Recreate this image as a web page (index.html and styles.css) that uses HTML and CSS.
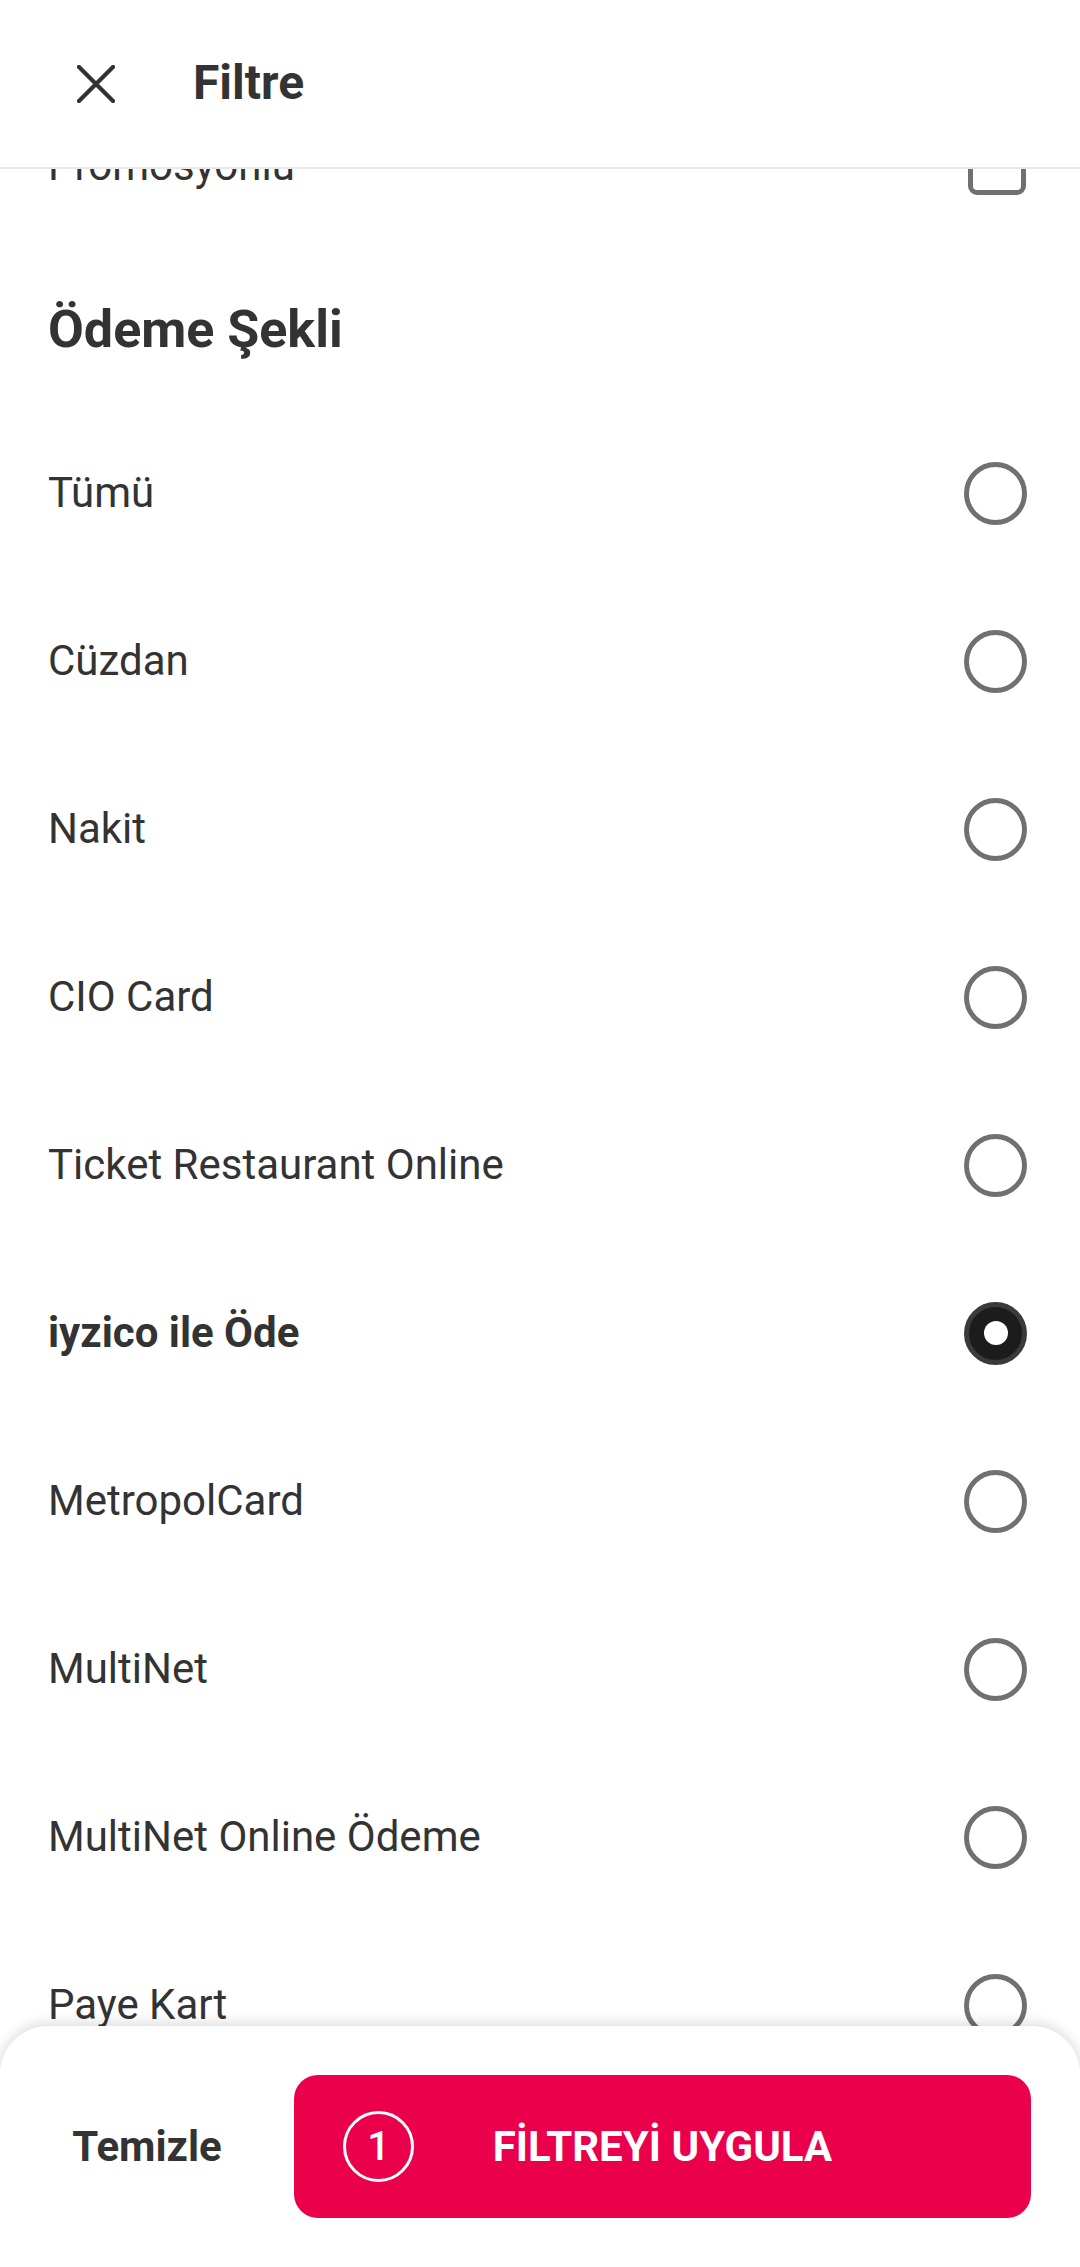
FILE: index.html
```html
<!DOCTYPE html>
<html lang="tr">
<head>
<meta charset="utf-8">
<title>Filtre</title>
<link rel="stylesheet" href="styles.css">
</head>
<body>
<div class="screen">
  <header class="topbar">
    <button class="close-btn" aria-label="Kapat">
      <svg width="38" height="38" viewBox="0 0 38 38"><path d="M2 2 L36 36 M36 2 L2 36" stroke="#333" stroke-width="4.2" stroke-linecap="round" fill="none"/></svg>
    </button>
    <h1 class="title">Filtre</h1>
  </header>
  <main class="content">
    <div class="list">
      <div class="row"><span class="label">Promosyonlu</span><span class="checkbox"></span></div>
      <h2 class="section-title">Ödeme Şekli</h2>
      <div class="row"><span class="label">Tümü</span><span class="radio"></span></div>
      <div class="row"><span class="label">Cüzdan</span><span class="radio"></span></div>
      <div class="row"><span class="label">Nakit</span><span class="radio"></span></div>
      <div class="row"><span class="label">CIO Card</span><span class="radio"></span></div>
      <div class="row"><span class="label">Ticket Restaurant Online</span><span class="radio"></span></div>
      <div class="row selected"><span class="label">iyzico ile Öde</span><span class="radio checked"></span></div>
      <div class="row"><span class="label">MetropolCard</span><span class="radio"></span></div>
      <div class="row"><span class="label">MultiNet</span><span class="radio"></span></div>
      <div class="row"><span class="label">MultiNet Online Ödeme</span><span class="radio"></span></div>
      <div class="row"><span class="label">Paye Kart</span><span class="radio"></span></div>
    </div>
  </main>
  <footer class="sheet">
    <button class="clear-btn">Temizle</button>
    <button class="apply-btn">
      <span class="badge">1</span>
      <span class="apply-text">FİLTREYİ UYGULA</span>
      <span class="spacer"></span>
    </button>
  </footer>
</div>
</body>
</html>
```

FILE: styles.css
```css
* { box-sizing: border-box; }
html, body { margin: 0; padding: 0; background: #fff; }
body { font-family: Roboto, "Noto Sans", "Liberation Sans", sans-serif; color: #333; }

.screen {
  position: relative;
  width: 1080px;
  height: 2267px;
  overflow: hidden;
  display: flex;
  flex-direction: column;
  background: #fff;
}

.topbar {
  flex: 0 0 169px;
  display: flex;
  align-items: center;
  padding-left: 77px;
  gap: 78px;
  border-bottom: 2px solid #e8e8e8;
  background: #fff;
  position: relative;
  z-index: 2;
}
.close-btn {
  border: 0;
  padding: 0;
  background: none;
  width: 38px;
  height: 38px;
  display: flex;
}
.title {
  margin: 0;
  font-size: 48px;
  font-weight: 700;
  color: #333;
  line-height: 1;
  padding-bottom: 2px;
}

.content {
  flex: 1;
  overflow: hidden;
}
.list {
  margin-top: -87px;
}
.row {
  height: 168px;
  display: flex;
  align-items: center;
  justify-content: space-between;
  padding: 0 53px 0 48px;
}
.label {
  font-size: 42px;
  line-height: 50px;
  color: #333;
}
.row.selected .label { font-weight: 700; }

.section-title {
  margin: 0;
  height: 159px;
  display: flex;
  align-items: center;
  padding-left: 48px;
  font-size: 52px;
  font-weight: 700;
  color: #333;
  line-height: 60px;
}

.radio {
  width: 63px;
  height: 63px;
  border: 5px solid #707070;
  border-radius: 50%;
  display: flex;
  align-items: center;
  justify-content: center;
}
.radio.checked {
  background: #1c1c1c;
  border-color: #3a3a3a;
}
.radio.checked::after {
  content: "";
  width: 24px;
  height: 24px;
  border-radius: 50%;
  background: #fff;
}
.checkbox {
  width: 58px;
  height: 58px;
  border: 5px solid #707070;
  border-radius: 9px;
  margin-right: 1px;
}

.sheet {
  position: absolute;
  left: 0;
  right: 0;
  bottom: 0;
  height: 241px;
  background: #fff;
  border-radius: 48px 48px 0 0;
  box-shadow: 0 -2px 14px rgba(0, 0, 0, 0.16);
  display: flex;
  align-items: center;
  padding: 0 49px;
  gap: 49px;
  z-index: 3;
}
.clear-btn {
  flex: 0 0 196px;
  border: 0;
  background: none;
  padding: 0;
  font-family: inherit;
  font-size: 42px;
  font-weight: 700;
  color: #333;
}
.apply-btn {
  flex: 1;
  height: 143px;
  border: 0;
  border-radius: 24px;
  background: #ea004b;
  color: #fff;
  font-family: inherit;
  display: grid;
  grid-template-columns: 1fr auto 1fr;
  align-items: center;
  padding: 0 49px;
}
.badge {
  justify-self: start;
  width: 71px;
  height: 71px;
  border: 3px solid #fff;
  border-radius: 50%;
  display: flex;
  align-items: center;
  justify-content: center;
  font-size: 40px;
  font-weight: 500;
}
.apply-text {
  font-size: 42px;
  font-weight: 700;
  letter-spacing: 0;
}
```
